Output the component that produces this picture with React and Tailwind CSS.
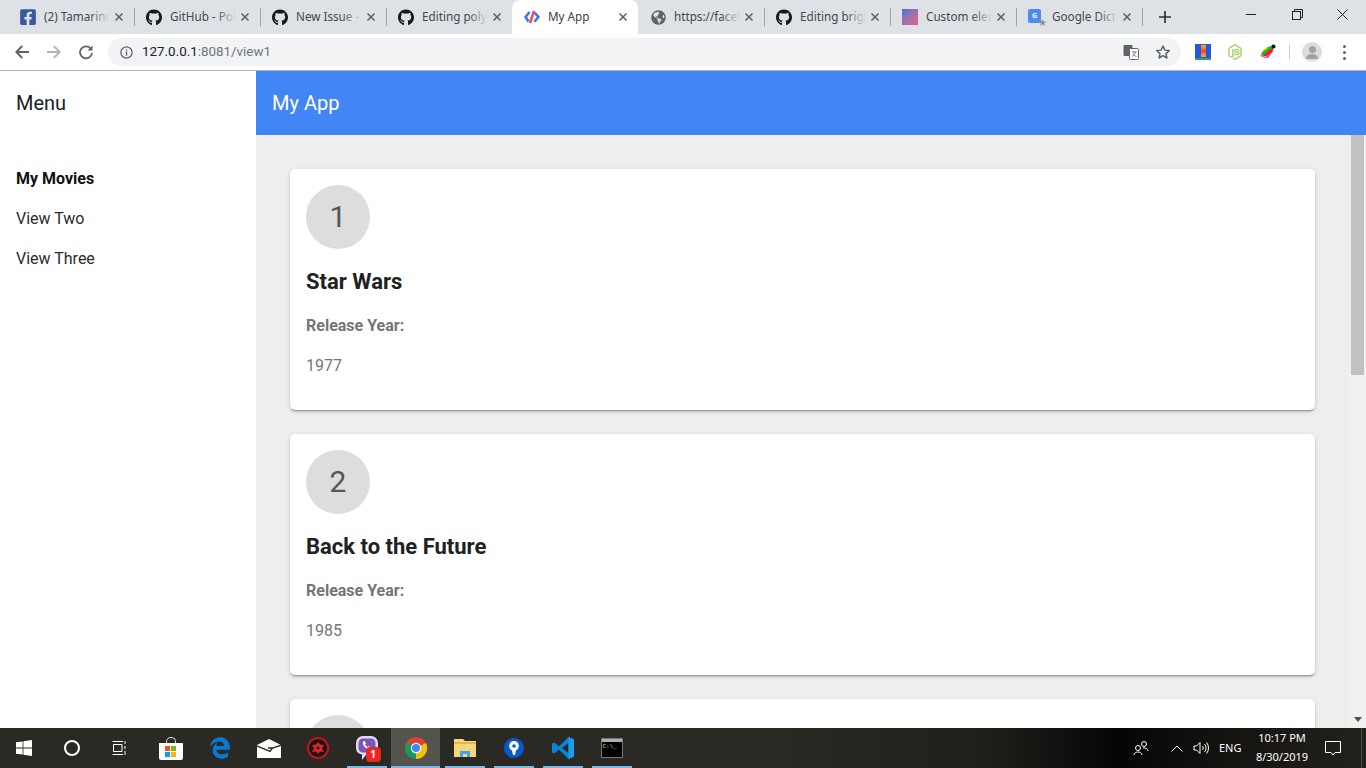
import React from "react";
import { FaFacebookSquare, FaGithub, FaGlobeAmericas, FaEdgeLegacy } from "react-icons/fa";
import { IoLogoNodejs } from "react-icons/io5";

const movies = [
  { id: 1, title: "Star Wars", year: "1977" },
  { id: 2, title: "Back to the Future", year: "1985" },
  { id: 3, title: "The Matrix", year: "1999" },
];

function PolymerLogo() {
  return (
    <svg width="16" height="16" viewBox="0 0 16 16" fill="none" strokeWidth="2.6">
      <path d="M5.5 3 L1.6 8 L4.5 12.5" stroke="#3b78e7" />
      <path d="M10.5 3.5 L14.4 8 L10.5 12.8" stroke="#3b78e7" />
      <path d="M10 2 L6 14" stroke="#ef4b6c" />
    </svg>
  );
}

function GoogleDict() {
  return (
    <div className="relative w-4 h-4">
      <div className="w-[13px] h-[14px] bg-[#4d8bf0] rounded-[2px] text-white text-[7px] font-bold leading-[14px] text-center">G</div>
      <div className="absolute right-[-3px] bottom-[-2px] text-[10px] leading-none text-[#8a8f96]">★</div>
    </div>
  );
}

const tabs = [
  { title: "(2) Tamarind", icon: <FaFacebookSquare size={18} className="text-[#3b5998]" /> },
  { title: "GitHub - Polymer", icon: <FaGithub size={17} className="text-[#16181a]" /> },
  { title: "New Issue - Polymer", icon: <FaGithub size={17} className="text-[#16181a]" /> },
  { title: "Editing polymer", icon: <FaGithub size={17} className="text-[#16181a]" /> },
  { title: "My App", icon: <PolymerLogo />, active: true },
  { title: "https://facebook", icon: <FaGlobeAmericas size={15} className="text-[#5f6368]" /> },
  { title: "Editing bright", icon: <FaGithub size={17} className="text-[#16181a]" /> },
  { title: "Custom elements", icon: <div className="w-4 h-4 bg-gradient-to-br from-[#3f6fd8] to-[#ee5a78]" /> },
  { title: "Google Dictionary", icon: <GoogleDict /> },
];

function CloseIcon({ className = "" }) {
  return (
    <svg width="10" height="10" viewBox="0 0 10 10" className={className}>
      <path d="M1.5 1.5 L8.5 8.5 M8.5 1.5 L1.5 8.5" stroke="#5f6368" strokeWidth="1.6" fill="none" />
    </svg>
  );
}

function Tab({ tab, hideSep }) {
  if (tab.active) {
    return (
      <div className="w-[126px] h-[34px] bg-white rounded-t-lg flex items-center pl-[12px] pr-[10px] shrink-0">
        <div className="w-4 flex justify-center shrink-0">{tab.icon}</div>
        <div className="ml-[8px] flex-1 text-[11.7px] text-[#3c4043]">{tab.title}</div>
        <CloseIcon />
      </div>
    );
  }
  return (
    <div className="w-[126px] h-[34px] flex items-center pl-[12px] pr-[10px] shrink-0 relative">
      <div className="w-4 flex justify-center shrink-0">{tab.icon}</div>
      <div className="relative ml-[8px] w-[66px] overflow-hidden whitespace-nowrap text-[11.7px] text-[#45484c]">
        {tab.title}
        <div className="absolute right-0 top-0 bottom-0 w-5 bg-gradient-to-r from-transparent to-[#dee1e6]" />
      </div>
      <CloseIcon className="ml-[4px]" />
      {!hideSep && <div className="absolute right-[-1px] top-[8px] h-[18px] w-px bg-[#a0a3a8]" />}
    </div>
  );
}

function TabStrip() {
  return (
    <div className="h-[34px] bg-[#dee1e6] flex pl-[8px] font-['Noto_Sans',sans-serif] shrink-0">
      {tabs.map((t, i) => (
        <Tab key={i} tab={t} hideSep={i === 3} />
      ))}
      <div className="w-[46px] flex items-center justify-center">
        <svg width="14" height="14" viewBox="0 0 14 14">
          <path d="M7 1 V13 M1 7 H13" stroke="#2f3235" strokeWidth="1.7" />
        </svg>
      </div>
      <div className="flex-1" />
      <div className="flex h-[28px]">
        <div className="w-[46px] flex items-center justify-center">
          <div className="w-[10px] h-px bg-[#222]" />
        </div>
        <div className="w-[46px] flex items-center justify-center">
          <svg width="11" height="11" viewBox="0 0 11 11" fill="none" stroke="#222">
            <rect x="0.5" y="2.5" width="8" height="8" />
            <path d="M2.5 2.5 V0.5 H10.5 V8.5 H8.5" />
          </svg>
        </div>
        <div className="w-[46px] pr-[2px] flex items-center justify-center">
          <svg width="11" height="11" viewBox="0 0 11 11">
            <path d="M0.5 0.5 L10.5 10.5 M10.5 0.5 L0.5 10.5" stroke="#222" />
          </svg>
        </div>
      </div>
    </div>
  );
}

function Toolbar() {
  return (
    <div className="h-[37px] bg-white border-b border-b-[#b4b4b4] flex items-center shrink-0 font-['Roboto',sans-serif]">
      <div className="w-[108px] flex items-center pl-[15px] shrink-0">
        <svg width="14" height="14" viewBox="0 0 14 14" fill="none" stroke="#5f6368" strokeWidth="1.9">
          <path d="M14 7 H1.5 M7.2 1 L1.3 7 L7.2 13" />
        </svg>
        <svg width="14" height="14" viewBox="0 0 14 14" fill="none" stroke="#b3b5b8" strokeWidth="1.9" className="ml-[18px]">
          <path d="M0 7 H12.5 M6.8 1 L12.7 7 L6.8 13" />
        </svg>
        <svg width="16" height="16" viewBox="0 0 16 16" fill="none" className="ml-[17px]">
          <path d="M13 5 A6 6 0 1 0 14 9" stroke="#5f6368" strokeWidth="1.8" />
          <path d="M14.5 1.5 V6.5 H9.5 Z" fill="#5f6368" />
        </svg>
      </div>
      <div className="w-[1073px] h-[28px] bg-[#f1f3f4] rounded-full flex items-center pl-[12px] pr-[10px] shrink-0">
        <svg width="13" height="13" viewBox="0 0 13 13" fill="none">
          <circle cx="6.5" cy="6.5" r="5.6" stroke="#5f6368" strokeWidth="1.3" />
          <path d="M6.5 5.6 V9.6 M6.5 3.2 V4.6" stroke="#5f6368" strokeWidth="1.4" />
        </svg>
        <span className="ml-[9px] text-[13.4px] text-[#202124]">
          127.0.0.1<span className="text-[#70757a]">:8081/view1</span>
        </span>
        <div className="flex-1" />
        <svg width="16" height="16" viewBox="0 0 16 16">
          <rect x="0.5" y="1" width="9" height="11" rx="1" fill="#5f6368" />
          <rect x="6.5" y="4.5" width="9" height="11" rx="1" fill="#fff" stroke="#5f6368" />
          <path d="M9 8 H13.5 M11 7 V8 M12.5 8 C12 10.5 10.5 11.5 9 12.5 M10 9.5 C10.8 11 12 12 13.5 12.5" stroke="#5f6368" strokeWidth="0.8" fill="none" />
        </svg>
        <svg width="16" height="16" viewBox="0 0 24 24" fill="none" stroke="#5f6368" strokeWidth="2.2" className="ml-[16px]">
          <path d="M12 3 L14.8 9.2 L21.5 9.9 L16.5 14.4 L17.9 21 L12 17.6 L6.1 21 L7.5 14.4 L2.5 9.9 L9.2 9.2 Z" strokeLinejoin="round" />
        </svg>
      </div>
      <div className="ml-[14px] w-4 h-4 bg-[#2855e0] relative flex justify-center overflow-hidden shrink-0">
        <div className="w-[5px] h-[12px] mt-[1px] bg-gradient-to-b from-[#f4b400] via-[#e8453c] to-[#f4b400]" />
        <div className="absolute bottom-0 left-0 right-0 h-[2px] bg-[#2e9e6b]" />
      </div>
      <IoLogoNodejs size={18} className="ml-[15px] text-[#a4d468] shrink-0" />
      <svg width="16" height="16" viewBox="0 0 16 16" className="ml-[16px] shrink-0">
        <path d="M0.5 12 C2 6 8 1.5 14 1.5 L9 9 Z" fill="#11c21f" />
        <path d="M1 13 L14 2 L12.5 8 C10 11.5 6 12 1 13 Z" fill="#f02020" />
        <path d="M2.5 14.5 L11 10 L8.5 13.5 Z" fill="#ee22dd" />
        <path d="M2 8 L8 4 L5.5 3.5 Z" fill="#f2e422" />
        <circle cx="13.5" cy="2.5" r="2" fill="#111" />
      </svg>
      <div className="ml-[13px] w-px h-[16px] bg-[#d0d2d4] shrink-0" />
      <div className="ml-[12px] w-5 h-5 rounded-full bg-[#dcdcdc] flex flex-col items-center justify-center overflow-hidden shrink-0">
        <div className="w-[7px] h-[7px] rounded-full bg-[#a2a2a2]" />
        <div className="w-3 h-[5px] rounded-t-full mt-px bg-[#a2a2a2]" />
      </div>
      <div className="ml-[21px] flex flex-col gap-[3px] shrink-0">
        <div className="w-[3px] h-[3px] rounded-full bg-[#5f6368]" />
        <div className="w-[3px] h-[3px] rounded-full bg-[#5f6368]" />
        <div className="w-[3px] h-[3px] rounded-full bg-[#5f6368]" />
      </div>
    </div>
  );
}

function MovieCard({ movie }) {
  return (
    <div className="bg-white rounded-[5px] pt-4 px-4 pb-4 mb-6 shadow-[0_2px_2px_0_rgba(0,0,0,0.14),0_1px_5px_0_rgba(0,0,0,0.12),0_3px_1px_-2px_rgba(0,0,0,0.2)]">
      <div className="w-16 h-16 rounded-full bg-[#dddddd] text-[#555555] text-[30px] pb-[2px] flex items-center justify-center">
        {movie.id}
      </div>
      <h1 className="mt-[17px] mb-4 text-[22px] leading-8 font-bold text-[#212121]">{movie.title}</h1>
      <p className="mb-4 text-base leading-6 font-bold text-[#757575]">Release Year:</p>
      <p className="mb-4 text-base leading-6 text-[#757575]">{movie.year}</p>
    </div>
  );
}

function Scrollbar() {
  return (
    <div className="w-[17px] bg-[#f1f1f1] shrink-0 flex flex-col items-center">
      <div className="self-start w-[13px] h-[240px] bg-[#c1c1c1] ml-[2px]" />
      <div className="flex-1" />
      <div className="w-0 h-0 mb-[6px] border-x-[4px] border-x-transparent border-t-[5px] border-t-[#505050]" />
    </div>
  );
}

function AppShell() {
  return (
    <div className="flex-1 flex min-h-0 font-['Roboto',sans-serif]">
      <aside className="w-[256px] bg-white shrink-0">
        <div className="h-16 flex items-center px-4 text-xl text-[#212121]">Menu</div>
        <nav className="pt-[24px]">
          <div className="h-10 px-4 flex items-center text-base font-bold text-[#111]">My Movies</div>
          <div className="h-10 px-4 flex items-center text-base text-[#2b2b2b]">View Two</div>
          <div className="h-10 px-4 flex items-center text-base text-[#2b2b2b]">View Three</div>
        </nav>
      </aside>
      <div className="flex-1 flex flex-col min-w-0">
        <header className="h-16 bg-[#4285f4] flex items-center px-4 text-xl text-white shrink-0">My App</header>
        <div className="flex-1 flex min-h-0 bg-[#eeeeee]">
          <main className="flex-1 min-w-0 overflow-hidden pt-[34px] pl-[34px] pr-[34px]">
            {movies.map((m) => (
              <MovieCard key={m.id} movie={m} />
            ))}
          </main>
          <Scrollbar />
        </div>
      </div>
    </div>
  );
}

function TaskCell({ children, running, active, className = "" }) {
  return (
    <div className={`w-[49px] h-10 flex items-center justify-center relative shrink-0 ${active ? "bg-[#55534e]" : ""} ${className}`}>
      {children}
      {running && active && <div className="absolute bottom-0 left-0 right-0 h-[2px] bg-[#76b9ed]" />}
      {running && !active && <div className="absolute bottom-0 left-[5px] right-[4px] h-[2px] bg-[#76b9ed]" />}
    </div>
  );
}

function Taskbar() {
  return (
    <div className="h-10 shrink-0 flex items-center text-white font-['Noto_Sans',sans-serif] bg-[linear-gradient(90deg,#2a2924_0%,#2a2924_55%,#211f1b_72%,#050505_82%,#0e0d0b_86%,#24221d_100%)]">
      <div className="w-12 h-10 flex items-center justify-center shrink-0">
        <svg width="16" height="16" viewBox="0 0 16 16" fill="#fff">
          <path d="M0 2.3 L6.6 1.4 V7.5 H0 Z M7.4 1.3 L16 0 V7.5 H7.4 Z M0 8.4 H6.6 V14.6 L0 13.7 Z M7.4 8.4 H16 V16 L7.4 14.8 Z" />
        </svg>
      </div>
      <div className="w-12 h-10 flex items-center justify-center shrink-0">
        <div className="w-4 h-4 rounded-full border-2 border-white" />
      </div>
      <div className="w-12 h-10 flex items-center justify-center shrink-0">
        <svg width="16" height="16" viewBox="0 0 16 16" fill="none" stroke="#fff">
          <path d="M0.5 1.5 H11 M0.5 14.5 H11 M1.5 4.5 H10 V11.5 H1.5 Z M13 1 V4 M13 6 V9 M13 11 V15" />
        </svg>
      </div>
      <TaskCell className="ml-[2px]">
        <div className="relative w-6 h-[17px] bg-white rounded-b-[2px] mt-[6px] flex items-center justify-center">
          <div className="absolute top-[-6px] left-[7px] w-[10px] h-[6px] rounded-t-full border border-[#ddd] border-b-0" />
          <div className="grid grid-cols-2 gap-px w-[11px]">
            <div className="w-[5px] h-[5px] bg-[#f25022]" />
            <div className="w-[5px] h-[5px] bg-[#7fba00]" />
            <div className="w-[5px] h-[5px] bg-[#00a4ef]" />
            <div className="w-[5px] h-[5px] bg-[#ffb900]" />
          </div>
        </div>
      </TaskCell>
      <TaskCell>
        <FaEdgeLegacy size={22} className="text-[#0a78d7]" />
      </TaskCell>
      <TaskCell>
        <svg width="24" height="19" viewBox="0 0 24 19">
          <path d="M0 6 L12 0 L24 6 V19 H0 Z" fill="#fff" />
          <path d="M-1 6.5 L13 12.5 L15.5 9 L25 6 M15.5 9 L11 9" stroke="#2a2924" strokeWidth="1.4" fill="none" />
        </svg>
      </TaskCell>
      <TaskCell>
        <div className="w-[22px] h-[22px] rounded-full bg-[#161616] border-2 border-[#c3161c] flex items-center justify-center">
          <svg width="12" height="12" viewBox="0 0 12 12">
            <path d="M6 0 L8 2.5 L12 3 L10 6.5 L12 10 L8 9.5 L6 12 L4 9.5 L0 10 L2 6.5 L0 3 L4 2.5 Z" fill="#e0262c" />
            <circle cx="6" cy="6" r="1.6" fill="#161616" />
          </svg>
        </div>
      </TaskCell>
      <TaskCell running>
        <div className="relative w-[22px] h-6">
          <svg width="22" height="24" viewBox="0 0 22 24">
            <path d="M7 0 H15 A7 7 0 0 1 22 7 V12 A7 7 0 0 1 15 19 H10 L6 24 V18.5 A7 7 0 0 1 0 12 V7 A7 7 0 0 1 7 0 Z" fill="#e3d8f5" />
            <path d="M7 2.5 H15 A4.5 4.5 0 0 1 19.5 7 V12 A4.5 4.5 0 0 1 15 16.5 H7 A4.5 4.5 0 0 1 2.5 12 V7 A4.5 4.5 0 0 1 7 2.5 Z" fill="#7c55b8" />
            <path d="M7 5.5 C6 7.5 8.5 12 12.5 13.5 L14.5 11.5 L12.5 10 L11.5 11 C10.5 10.5 9.5 9.5 9 8.5 L10 7.5 L8.5 5 Z" fill="#fff" />
          </svg>
          <div className="absolute right-[-3px] bottom-[-2px] w-[15px] h-[15px] rounded-[4px] bg-[#e8291f] text-white text-[10px] font-bold leading-[15px] text-center">1</div>
        </div>
      </TaskCell>
      <TaskCell running active>
        <svg width="24" height="24" viewBox="0 0 24 24">
          <circle cx="12" cy="12" r="11" fill="#db4437" />
          <path d="M12 12 L22 7 A11 11 0 0 1 12 23 Z" fill="#f4c20d" />
          <path d="M12 12 L12 23 A11 11 0 0 1 2.5 6.5 Z" fill="#0f9d58" />
          <circle cx="12" cy="12" r="5.2" fill="#fff" />
          <circle cx="12" cy="12" r="4" fill="#4285f4" />
        </svg>
      </TaskCell>
      <TaskCell running>
        <svg width="22" height="20" viewBox="0 0 22 20">
          <path d="M0 1 H9 L11 3 H22 V19 H0 Z" fill="#f6d67a" />
          <path d="M0 4 H22 V6 H0 Z" fill="#e3b74e" />
          <path d="M6 19 V13 H16 V19 H13 V16 H9 V19 Z" fill="#39a7e8" />
        </svg>
      </TaskCell>
      <TaskCell running>
        <div className="w-[20px] h-[20px] rounded-full bg-[#0b57d0] flex items-center justify-center">
          <svg width="10" height="14" viewBox="0 0 10 14">
            <path d="M5 0 A5 5 0 0 1 7 9.5 L6 14 H4 L3 9.5 A5 5 0 0 1 5 0 Z" fill="#fff" />
            <circle cx="5" cy="5" r="1.8" fill="#0b57d0" />
          </svg>
        </div>
      </TaskCell>
      <TaskCell running>
        <svg width="24" height="24" viewBox="0 0 24 24">
          <path d="M17.5 1 L23 3.6 V20.4 L17.5 23 L8 13.8 L3 17.6 L1 16.6 V7.4 L3 6.4 L8 10.2 Z M17.5 7 L11 12 L17.5 17 Z" fill="#0a84d6" fillRule="evenodd" />
          <path d="M17.5 1 L23 3.6 V20.4 L17.5 23 Z" fill="#1e9cef" />
        </svg>
      </TaskCell>
      <TaskCell running>
        <div className="w-[22px] h-[20px] bg-black border border-[#777] flex flex-col">
          <div className="h-[3px] bg-[#b0b0b0]" />
          <div className="text-[6px] leading-[8px] font-['Liberation_Mono',monospace] text-[#ddd] pl-px pt-px">C:\_</div>
        </div>
      </TaskCell>
      <div className="flex-1" />
      <svg width="16" height="16" viewBox="0 0 16 16" fill="none" stroke="#fff" className="shrink-0">
        <circle cx="5" cy="8" r="2.5" />
        <path d="M1 15 C1 11 9 11 9 15" />
        <circle cx="11" cy="4" r="2.5" />
        <path d="M10 8 C12 7.5 15 8.5 15 11" />
      </svg>
      <svg width="12" height="7" viewBox="0 0 12 7" fill="none" stroke="#fff" className="ml-[22px] shrink-0">
        <path d="M0.5 6.5 L6 1 L11.5 6.5" />
      </svg>
      <svg width="16" height="14" viewBox="0 0 16 14" fill="none" stroke="#fff" className="ml-[10px] shrink-0">
        <path d="M1 5 H3.5 L7 1.5 V12.5 L3.5 9 H1 Z M9.5 5 A3 3 0 0 1 9.5 9 M11.5 3 A6 6 0 0 1 11.5 11 M13.5 1.5 A8.5 8.5 0 0 1 13.5 12.5" />
      </svg>
      <span className="ml-[10px] w-[26px] text-[11px] shrink-0">ENG</span>
      <div className="-ml-px w-[76px] shrink-0 text-[11px] leading-[19px] text-center pb-[2px]">
        <div>10:17 PM</div>
        <div>8/30/2019</div>
      </div>
      <svg width="16" height="16" viewBox="0 0 16 16" fill="none" stroke="#fff" className="ml-[5px] shrink-0">
        <path d="M0.5 1.5 H15.5 V12.5 H10 L8 15 L6 12.5 H0.5 Z" />
      </svg>
      <div className="ml-[20px] w-px h-10 bg-[#4a4945] shrink-0" />
      <div className="w-[4px] shrink-0" />
    </div>
  );
}

export default function App() {
  return (
    <div className="w-[1366px] h-[768px] overflow-hidden flex flex-col">
      <TabStrip />
      <Toolbar />
      <AppShell />
      <Taskbar />
    </div>
  );
}
